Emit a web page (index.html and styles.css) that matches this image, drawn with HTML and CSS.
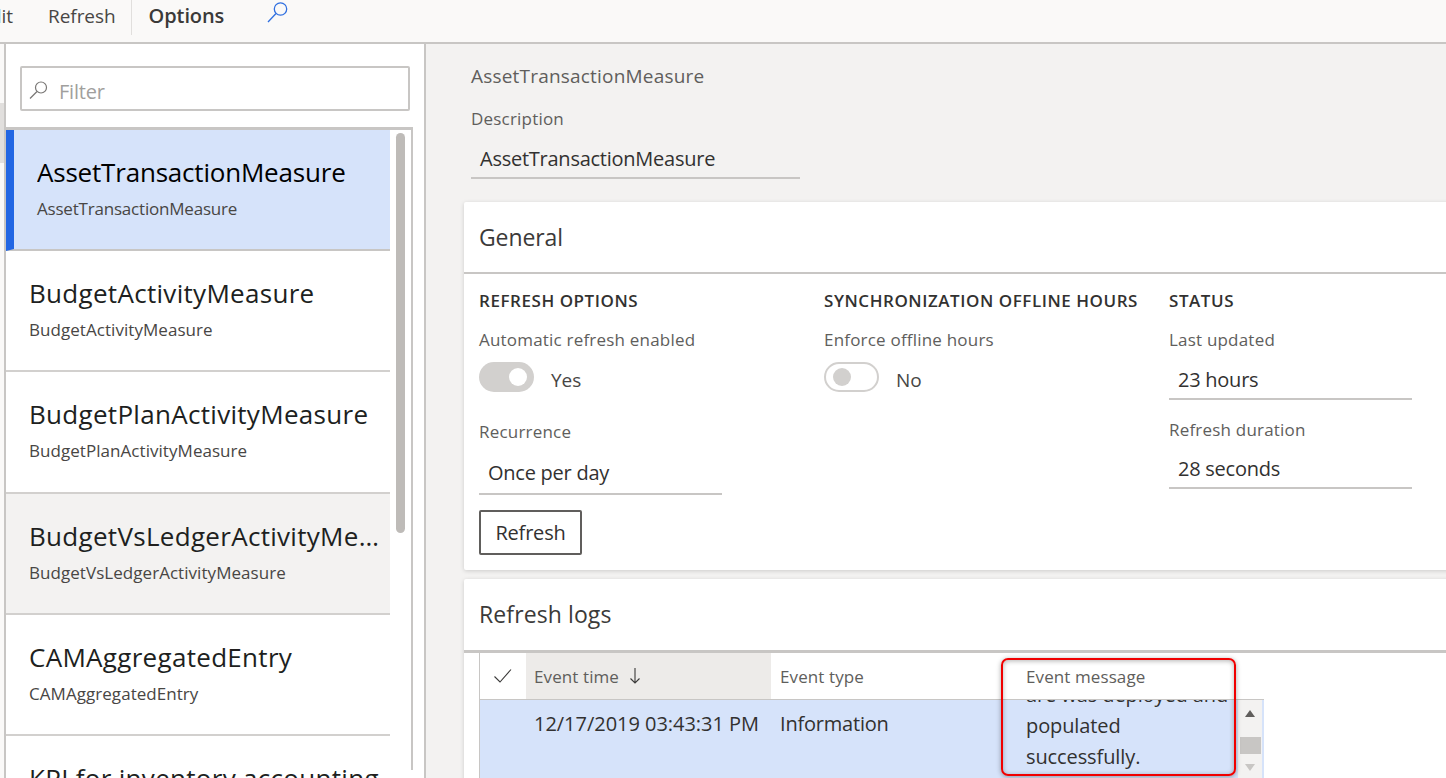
FILE: index.html
```html
<!DOCTYPE html>
<html lang="en">
<head>
    <meta charset="UTF-8">
    <title>Entity store</title>
    <link rel="stylesheet" href="styles.css">
</head>
<body>
    <div class="topbar">
        <span class="cmd cmd-cut">Edit</span>
        <span class="cmd cmd-refresh">Refresh</span>
        <span class="cmd cmd-options">Options</span>
        <svg class="top-search" width="24" height="24" viewBox="0 0 24 24" fill="none" stroke="#2f6fe0" stroke-width="1.3">
            <circle cx="14.5" cy="8" r="6.2"/>
            <path d="M10 12.5 2 21"/>
        </svg>
    </div>

    <div class="content">
        <div class="rail"><div class="rail-mark"></div></div>

        <div class="side">
            <div class="filter">
                <svg width="20" height="20" viewBox="0 0 20 20" fill="none" stroke="#797775" stroke-width="1.2">
                    <circle cx="12" cy="7.5" r="5.5"/>
                    <path d="M8 11.5 1 18.5"/>
                </svg>
                <span>Filter</span>
            </div>
            <div class="list">
                <div class="list-items">
                    <div class="item item-selected">
                        <div class="item-title">AssetTransactionMeasure</div>
                        <div class="item-sub">AssetTransactionMeasure</div>
                    </div>
                    <div class="item">
                        <div class="item-title">BudgetActivityMeasure</div>
                        <div class="item-sub">BudgetActivityMeasure</div>
                    </div>
                    <div class="item">
                        <div class="item-title">BudgetPlanActivityMeasure</div>
                        <div class="item-sub">BudgetPlanActivityMeasure</div>
                    </div>
                    <div class="item item-hover">
                        <div class="item-title">BudgetVsLedgerActivityMeasure</div>
                        <div class="item-sub">BudgetVsLedgerActivityMeasure</div>
                    </div>
                    <div class="item">
                        <div class="item-title">CAMAggregatedEntry</div>
                        <div class="item-sub">CAMAggregatedEntry</div>
                    </div>
                    <div class="item">
                        <div class="item-title">KPI for inventory accounting</div>
                        <div class="item-sub">KPI for inventory accounting</div>
                    </div>
                </div>
                <div class="list-scroll"><div class="list-thumb"></div></div>
            </div>
        </div>

        <div class="main">
            <div class="page-title">AssetTransactionMeasure</div>
            <div class="field-label desc-label">Description</div>
            <div class="field-value desc-value">AssetTransactionMeasure</div>

            <div class="card card-general">
                <div class="card-head">General</div>
                <div class="general-cols">
                    <div class="col col-one">
                        <div class="group-title">REFRESH OPTIONS</div>
                        <div class="field-label">Automatic refresh enabled</div>
                        <div class="toggle-row">
                            <span class="toggle toggle-on"><i></i></span>
                            <span class="toggle-text">Yes</span>
                        </div>
                        <div class="field-label recur-label">Recurrence</div>
                        <div class="field-value recur-value">Once per day</div>
                        <div class="btn">Refresh</div>
                    </div>
                    <div class="col col-two">
                        <div class="group-title">SYNCHRONIZATION OFFLINE HOURS</div>
                        <div class="field-label">Enforce offline hours</div>
                        <div class="toggle-row">
                            <span class="toggle toggle-off"><i></i></span>
                            <span class="toggle-text">No</span>
                        </div>
                    </div>
                    <div class="col col-three">
                        <div class="group-title">STATUS</div>
                        <div class="field-label">Last updated</div>
                        <div class="field-value status-value">23 hours</div>
                        <div class="field-label duration-label">Refresh duration</div>
                        <div class="field-value status-value">28 seconds</div>
                    </div>
                </div>
            </div>

            <div class="card card-logs">
                <div class="card-head card-head-logs">Refresh logs</div>
                <div class="grid">
                    <div class="grid-head">
                        <div class="th th-check">
                            <svg width="20" height="16" viewBox="0 0 20 16" fill="none" stroke="#3b3a39" stroke-width="1.1">
                                <path d="M1.5 8.5 7 14 18 1.5"/>
                            </svg>
                        </div>
                        <div class="th th-time">Event time
                            <svg width="12" height="18" viewBox="0 0 12 18" fill="none" stroke="#3b3a39" stroke-width="1.1">
                                <path d="M6 1v15M1.5 11.5 6 16l4.5-4.5"/>
                            </svg>
                        </div>
                        <div class="th th-type">Event type</div>
                        <div class="th th-message">Event message</div>
                    </div>
                    <div class="grid-row">
                        <div class="td td-check"></div>
                        <div class="td td-time">12/17/2019 03:43:31 PM</div>
                        <div class="td td-type">Information</div>
                        <div class="td td-message">
                            <div class="message-text">are was deployed and<br>populated<br>successfully.</div>
                        </div>
                        <div class="cell-scroll">
                            <span class="arrow-up"></span>
                            <span class="cell-thumb"></span>
                            <span class="arrow-down"></span>
                        </div>
                    </div>
                </div>
            </div>

            <div class="callout"></div>
        </div>
    </div>
</body>
</html>
```

FILE: styles.css
```css
html, body {
    margin: 0;
    height: 778px;
    overflow: hidden;
}

body {
    font-family: "Open Sans", "Noto Sans", sans-serif;
    color: #323130;
    background: #f3f2f1;
    font-size: 18px;
}

/* top command bar */
.topbar {
    height: 42px;
    background: #faf9f8;
    border-bottom: 2px solid #c8c6c4;
    display: flex;
    align-items: flex-start;
    overflow: hidden;
}

.cmd {
    font-size: 19px;
    line-height: 32px;
    letter-spacing: -0.05px;
}

.cmd-cut {
    width: 48px;
    flex: none;
    margin-left: -35px;
    margin-right: 35px;
    text-align: right;
    color: #484644;
}

.cmd-refresh {
    color: #484644;
    padding-right: 15px;
    border-right: 1px solid #e1dfdd;
    height: 35px;
}

.cmd-options {
    padding-left: 17px;
    font-size: 20px;
    letter-spacing: -0.1px;
    font-weight: 600;
    color: #3b3a39;
}

.top-search {
    margin: 1px 0 0 42px;
}

.content {
    display: flex;
    height: 734px;
}

.rail {
    width: 4px;
    background: #faf9f8;
}

.rail-mark {
    margin-top: 59px;
    height: 60px;
    background: #e1dfdd;
}

/* left list */
.side {
    width: 418px;
    flex: none;
    background: #fff;
    border-left: 2px solid #c8c6c4;
    border-right: 2px solid #c8c6c4;
    overflow: hidden;
}

.filter {
    margin: 22px 0 0 14px;
    width: 386px;
    height: 41px;
    border: 2px solid #c8c6c4;
    border-radius: 2px;
    display: flex;
    align-items: center;
    color: #a19f9d;
    font-size: 20px;
    letter-spacing: -0.2px;
}

.filter svg {
    margin: 3px 10px 0 7px;
}

.filter span {
    padding-top: 6px;
}

.list {
    margin-top: 16px;
    width: 405px;
    display: flex;
    border-top: 3px solid #c8c6c4;
    border-right: 2px solid #c8c6c4;
    height: 640px;
}

.list-items {
    width: 384px;
    flex: none;
}

.item {
    height: 95.2px;
    border-bottom: 2px solid #d2d0ce;
    padding: 24px 0 0 23px;
}

.item-selected {
    background: #d6e3fa;
    border-left: 8px solid #2266e3;
    padding-left: 23px;
    border-bottom-color: #c8c6c4;
}

.item-hover {
    background: #f3f2f1;
}

.item-title {
    font-size: 26px;
    line-height: 36px;
    letter-spacing: 0.3px;
    color: #201f1e;
    white-space: nowrap;
    overflow: hidden;
    text-overflow: ellipsis;
}

.item-selected .item-title {
    color: #000;
    letter-spacing: -0.2px;
}

.item-sub {
    font-size: 17px;
    line-height: 24px;
    margin-top: 7px;
    color: #484644;
    letter-spacing: 0.05px;
}

.item-selected .item-sub {
    letter-spacing: -0.2px;
}

.list-scroll {
    flex: 1;
    padding: 3px 0 0 6px;
}

.list-thumb {
    width: 9px;
    height: 400px;
    background: #bebbb8;
    border-radius: 5px;
}

/* right side */
.main {
    flex: 1;
    position: relative;
    overflow: hidden;
    padding-left: 38px;
}

.page-title {
    margin: 19px 0 0 7px;
    font-size: 19px;
    line-height: 26px;
    color: #605e5c;
    letter-spacing: 0.2px;
}

.field-label {
    font-size: 17px;
    line-height: 24px;
    color: #605e5c;
    letter-spacing: 0.2px;
}

.desc-label {
    margin: 18px 0 0 7px;
}

.field-value {
    font-size: 20px;
    line-height: 37px;
    color: #323130;
    border-bottom: 2px solid #c8c6c4;
    padding-left: 9px;
    box-sizing: border-box;
    letter-spacing: -0.25px;
}

.desc-value {
    margin: 9px 0 0 7px;
    width: 329px;
    height: 39px;
}

.card {
    background: #fff;
    box-shadow: 0 1px 4px rgba(0, 0, 0, 0.16);
    border-radius: 2px 0 0 2px;
    width: 1100px;
}

.card-general {
    margin-top: 23px;
    height: 368px;
}

.card-logs {
    margin-top: 9px;
    height: 240px;
}

.card-head {
    height: 72px;
    padding: 18px 0 0 15px;
    box-sizing: border-box;
    font-size: 23px;
    line-height: 34px;
    border-bottom: 2px solid #c8c6c4;
    letter-spacing: -0.1px;
    color: #3b3a39;
}

.card-head-logs {
    height: 74px;
    border-bottom-width: 3px;
    letter-spacing: 0.1px;
}

.general-cols {
    display: flex;
    padding: 15px 0 0 15px;
}

.col-one,
.col-two {
    width: 345px;
    flex: none;
}

.col-three {
    width: 243px;
    flex: none;
}

.group-title {
    font-size: 17px;
    line-height: 24px;
    font-weight: 600;
    color: #323130;
    letter-spacing: 0.55px;
    white-space: nowrap;
    margin-bottom: 15px;
}

.toggle-row {
    display: flex;
    align-items: center;
    gap: 17px;
    margin-top: 10px;
    font-size: 19px;
    height: 30px;
    color: #484644;
}

.toggle-text {
    padding-top: 6px;
}

.toggle {
    width: 55px;
    height: 30px;
    border-radius: 15px;
    box-sizing: border-box;
    display: flex;
    align-items: center;
    flex: none;
}

.toggle i {
    width: 18px;
    height: 18px;
    border-radius: 50%;
}

.toggle-on {
    background: #d2d0ce;
    justify-content: flex-end;
    padding-right: 7px;
}

.toggle-on i {
    background: #fff;
}

.toggle-off {
    border: 2px solid #d2d0ce;
    background: #fff;
    padding-left: 7px;
}

.toggle-off i {
    background: #d2d0ce;
}

.recur-label {
    margin-top: 28px;
}

.recur-value {
    margin-top: 10px;
    width: 243px;
    height: 41px;
}

.btn {
    margin-top: 15px;
    width: 103px;
    height: 45px;
    box-sizing: border-box;
    border: 2px solid #605e5c;
    border-radius: 2px;
    font-size: 20px;
    line-height: 41px;
    text-align: center;
    letter-spacing: -0.2px;
}

.status-value {
    width: 243px;
    height: 39px;
    margin-top: 9px;
}

.duration-label {
    margin-top: 18px;
    margin-bottom: -1px;
}

/* logs grid */
.grid {
    margin-left: 15px;
    width: 784px;
    border-left: 1px solid #c8c6c4;
}

.grid-head {
    display: flex;
    height: 46px;
    border-bottom: 1px solid #c8c6c4;
    font-size: 17px;
    color: #605e5c;
    letter-spacing: 0.1px;
    background: #fff;
    position: relative;
    z-index: 1;
}

.th {
    display: flex;
    align-items: center;
    gap: 10px;
    box-sizing: border-box;
    padding-left: 8px;
}

.th-check {
    width: 46px;
    padding-left: 13px;
}

.th-time {
    width: 245px;
    background: #edebe9;
}

.th-type {
    width: 231px;
    padding-left: 9px;
}

.th-message {
    padding-left: 24px;
    align-items: flex-end;
    padding-bottom: 11px;
}

.grid-row {
    display: flex;
    height: 90px;
    background: #d6e3fa;
    font-size: 20px;
    letter-spacing: -0.03px;
    color: #323130;
    line-height: 31px;
}

.td {
    box-sizing: border-box;
}

.td-check {
    width: 46px;
}

.td-time {
    width: 245px;
    padding: 8px 0 0 8px;
    white-space: nowrap;
}

.td-type {
    width: 231px;
    padding: 8px 0 0 9px;
    letter-spacing: -0.2px;
}

.td-message {
    width: 236px;
    padding-left: 24px;
    overflow: hidden;
}

.message-text {
    margin-top: -21px;
    letter-spacing: -0.1px;
}

.cell-scroll {
    width: 24px;
    background: #f3f2f1;
    display: flex;
    flex-direction: column;
    align-items: center;
    padding-top: 10px;
    box-sizing: border-box;
}

.arrow-up {
    border: 5px solid transparent;
    border-top: 0;
    border-bottom: 7px solid #605e5c;
}

.cell-thumb {
    width: 21px;
    height: 17px;
    background: #c8c6c4;
    margin-top: 20px;
}

.arrow-down {
    border: 5px solid transparent;
    border-bottom: 0;
    border-top: 7px solid #c8c6c4;
    margin-top: 10px;
}

/* red annotation drawn over the grid */
.callout {
    position: absolute;
    left: 575px;
    top: 614px;
    width: 235px;
    height: 118px;
    box-sizing: border-box;
    border: 2px solid #f00000;
    border-radius: 7px;
    box-shadow: 0 1px 5px rgba(0, 0, 0, 0.35), inset 0 1px 5px rgba(0, 0, 0, 0.3);
    z-index: 2;
}
```
